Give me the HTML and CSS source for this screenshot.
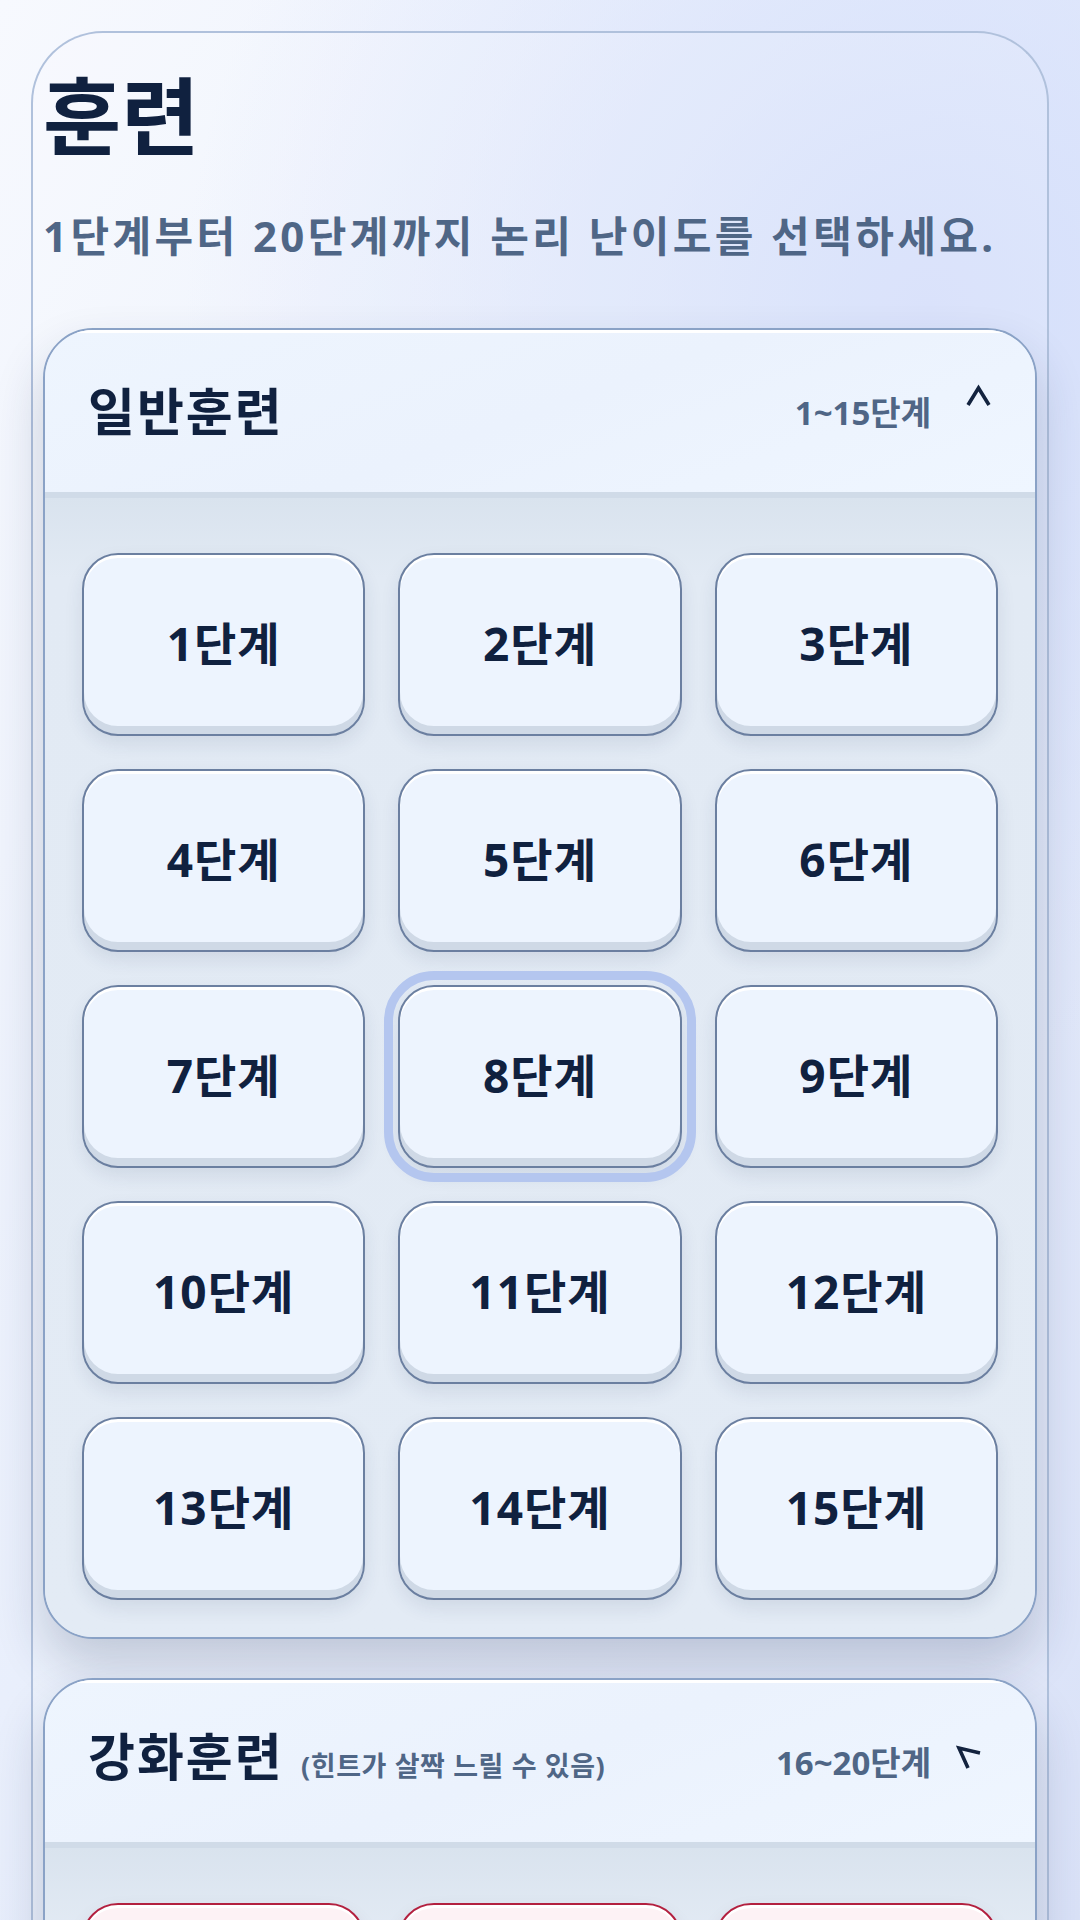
FILE: index.html
```html
<!DOCTYPE html>
<html lang="ko">
<head>
    <meta charset="UTF-8">
    <meta name="viewport" content="width=device-width, initial-scale=1.0">
    <title>훈련</title>
    <link rel="stylesheet" href="styles.css">
</head>
<body>
    <div class="page">
        <div class="panel">
            <h1 class="title">훈련</h1>
            <p class="subtitle">1단계부터 20단계까지 논리 난이도를 선택하세요.</p>

            <section class="card">
                <div class="card-head">
                    <div class="head-title">일반훈련</div>
                    <div class="head-right">
                        <span class="range">1~15단계</span>
                        <svg class="chev" width="34" height="40" viewBox="0 0 34 40">
                            <polyline points="12,25 22.5,8 33,25" />
                        </svg>
                    </div>
                </div>
                <div class="card-body">
                    <div class="grid">
                        <button class="level">1단계</button>
                        <button class="level">2단계</button>
                        <button class="level">3단계</button>
                        <button class="level">4단계</button>
                        <button class="level">5단계</button>
                        <button class="level">6단계</button>
                        <button class="level">7단계</button>
                        <button class="level focused">8단계</button>
                        <button class="level">9단계</button>
                        <button class="level">10단계</button>
                        <button class="level">11단계</button>
                        <button class="level">12단계</button>
                        <button class="level">13단계</button>
                        <button class="level">14단계</button>
                        <button class="level">15단계</button>
                    </div>
                </div>
            </section>

            <section class="card">
                <div class="card-head">
                    <div class="head-title">강화훈련 <span class="hint">(힌트가 살짝 느릴 수 있음)</span></div>
                    <div class="head-right">
                        <span class="range">16~20단계</span>
                        <svg class="chev" width="34" height="40" viewBox="0 0 34 40">
                            <polyline points="24,23 3,18 12,38" />
                        </svg>
                    </div>
                </div>
                <div class="card-body">
                    <div class="grid">
                        <button class="level hard">16단계</button>
                        <button class="level hard">17단계</button>
                        <button class="level hard">18단계</button>
                        <button class="level hard">19단계</button>
                        <button class="level hard">20단계</button>
                    </div>
                </div>
            </section>
        </div>
    </div>
</body>
</html>
```

FILE: styles.css
```css
html, body {
    margin: 0;
    height: 100%;
}
body {
    font-family: "Noto Sans", "Noto Sans CJK KR", sans-serif;
    color: #10213f;
    background:
        radial-gradient(circle at 86% 16%, #d5dffb 0, rgba(213, 223, 251, 0) 40%),
        linear-gradient(120deg, #f7f9fe 0%, #e9effc 45%, #dae2f8 100%);
    overflow: hidden;
}
.page {
    padding: 31px 31px 0;
}
.panel {
    border: 2px solid #b0c1dc;
    border-bottom: none;
    border-radius: 72px 72px 0 0;
    padding: 35px 10px 0;
    background: rgba(255, 255, 255, 0.12);
}
.title {
    margin: 0;
    font-size: 85px;
    line-height: 96px;
    font-weight: 700;
    color: #10213f;
}
.subtitle {
    margin: 46px 0 0;
    font-size: 42px;
    line-height: 52px;
    font-weight: 700;
    letter-spacing: 3.4px;
    color: #4f6686;
}
.card {
    margin-top: 66px;
    border: 2px solid #8aa2c6;
    border-radius: 50px;
    overflow: hidden;
    background: #e2eaf4;
    box-shadow: 0 26px 50px rgba(30, 45, 80, 0.2);
}
.card + .card {
    margin-top: 39px;
}
.card-head {
    height: 162px;
    display: flex;
    align-items: center;
    justify-content: space-between;
    padding: 0 45px 0 43px;
    background: linear-gradient(160deg, #eef5fe 0%, #ebf2fd 50%, #eff6ff 100%);
    border-bottom: 6px solid #d0dbe8;
    box-shadow: inset 0 3px 0 #ffffff;
}
.head-title {
    font-size: 51px;
    line-height: 60px;
    font-weight: 700;
    letter-spacing: 2px;
    color: #10213f;
    white-space: nowrap;
}
.hint {
    font-size: 27px;
    letter-spacing: 0.6px;
    color: #4f6686;
    margin-left: 2px;
}
.head-right {
    display: flex;
    align-items: center;
    gap: 25px;
}
.range {
    font-size: 33px;
    font-weight: 700;
    color: #4f6686;
}
.chev {
    overflow: visible;
    margin-bottom: 22px;
}
.chev polyline {
    fill: none;
    stroke: #13233f;
    stroke-width: 3.6;
}
.card-body {
    padding: 55px 37px 37px;
    background: linear-gradient(180deg, #d9e3ee 0, #e2eaf4 80px, #e3ebf5 100%);
}
.grid {
    display: grid;
    grid-template-columns: repeat(3, 1fr);
    grid-auto-rows: 183px;
    gap: 33px;
}
.level {
    font-family: inherit;
    font-size: 46px;
    font-weight: 700;
    letter-spacing: 1px;
    color: #10213f;
    padding: 0 0 8px;
    background: #edf4fe;
    border: 2px solid #6b7fa0;
    border-radius: 36px;
    box-shadow: inset 0 -8px 0 #cfd9e6, inset 0 3px 0 #ffffff, 0 8px 18px rgba(40, 60, 100, 0.1);
    cursor: pointer;
}
.level.focused {
    outline: 9px solid #b4c6ef;
    outline-offset: 5px;
}
.level.hard {
    background: #fdf2f5;
    border-color: #b3203f;
    color: #7a1027;
    box-shadow: inset 0 -8px 0 #f1d6de, inset 0 3px 0 #ffffff, 0 8px 18px rgba(100, 40, 60, 0.1);
}
```
